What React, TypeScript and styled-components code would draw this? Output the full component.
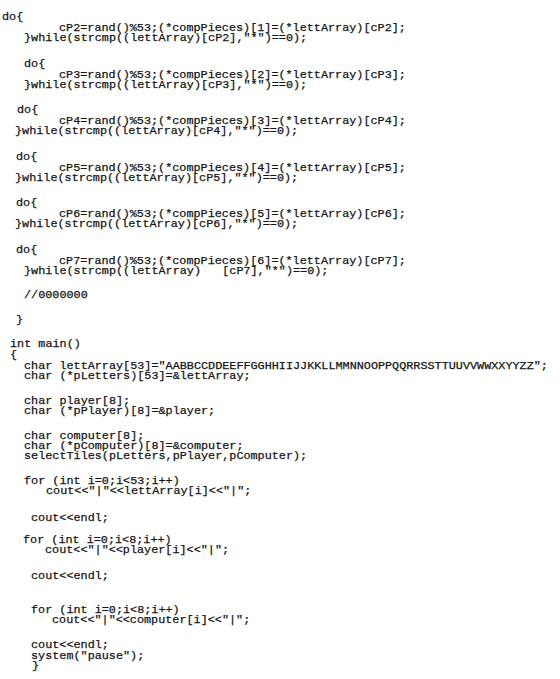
import React from "react";
import styled, { createGlobalStyle } from "styled-components";

const Global = createGlobalStyle`
  html, body { margin: 0; padding: 0; background: #ffffff; }
  #root { width: 560px; min-height: 679px; background: #ffffff; }
`;

const Code = styled.pre`
  margin: 0;
  padding: 12px 0 0 0;
  display: flex;
  flex-direction: column;
  font-family: "Liberation Mono", "DejaVu Sans Mono", monospace;
  font-size: 11.8px;
  line-height: 10px;
  color: #141414;
  -webkit-text-stroke: 0.25px #141414;
`;

const Line = styled.div<{ $x: number; $gap: number }>`
  white-space: pre;
  height: 10px;
  padding-left: ${(p) => p.$x}px;
  margin-top: ${(p) => p.$gap}px;
`;

type L = [string, number, number];

const lines: L[] = [
  ["do{", 2, 0],
  ['cP2=rand()%53;(*compPieces)[1]=(*lettArray)[cP2];', 59, 1],
  ['}while(strcmp((lettArray)[cP2],"*")==0);', 24, 0],
  ["do{", 24, 15.5],
  ['cP3=rand()%53;(*compPieces)[2]=(*lettArray)[cP3];', 59, 1],
  ['}while(strcmp((lettArray)[cP3],"*")==0);', 24, 0],
  ["do{", 17, 15.5],
  ['cP4=rand()%53;(*compPieces)[3]=(*lettArray)[cP4];', 59, 1],
  ['}while(strcmp((lettArray)[cP4],"*")==0);', 15, 0],
  ["do{", 16, 15.5],
  ['cP5=rand()%53;(*compPieces)[4]=(*lettArray)[cP5];', 59, 1],
  ['}while(strcmp((lettArray)[cP5],"*")==0);', 15, 0],
  ["do{", 16, 15.5],
  ['cP6=rand()%53;(*compPieces)[5]=(*lettArray)[cP6];', 59, 1],
  ['}while(strcmp((lettArray)[cP6],"*")==0);', 15, 0],
  ["do{", 16, 15.5],
  ['cP7=rand()%53;(*compPieces)[6]=(*lettArray)[cP7];', 59, 1],
  ['}while(strcmp((lettArray)   [cP7],"*")==0);', 24, 0],
  ["//0000000", 24, 14.5],
  ["}", 16, 15],
  ["int main()", 10, 14],
  ["{", 10, 1],
  ['char lettArray[53]="AABBCCDDEEFFGGHHIIJJKKLLMMNNOOPPQQRRSSTTUUVVWWXXYYZZ";', 24, 1],
  ["char (*pLetters)[53]=&lettArray;", 24, 0],
  ["char player[8];", 24, 15],
  ["char (*pPlayer)[8]=&player;", 24, 0],
  ["char computer[8];", 24, 15],
  ["char (*pComputer)[8]=&computer;", 24, 0],
  ["selectTiles(pLetters,pPlayer,pComputer);", 24, 0],
  ["for (int i=0;i<53;i++)", 24, 15],
  ['cout<<"|"<<lettArray[i]<<"|";', 46, 0],
  ["cout<<endl;", 31, 17],
  ["for (int i=0;i<8;i++)", 23, 12],
  ['cout<<"|"<<player[i]<<"|";', 45, 0],
  ["cout<<endl;", 31, 16],
  ["for (int i=0;i<8;i++)", 31, 24],
  ['cout<<"|"<<computer[i]<<"|";', 52, 0],
  ["cout<<endl;", 31, 15],
  ['system("pause");', 31, 1],
  ["}", 32, 0],
];

export default function App() {
  return (
    <>
      <Global />
      <Code>
        {lines.map(([t, x, g], i) => (
          <Line key={i} $x={x} $gap={g}>
            {t}
          </Line>
        ))}
      </Code>
    </>
  );
}
